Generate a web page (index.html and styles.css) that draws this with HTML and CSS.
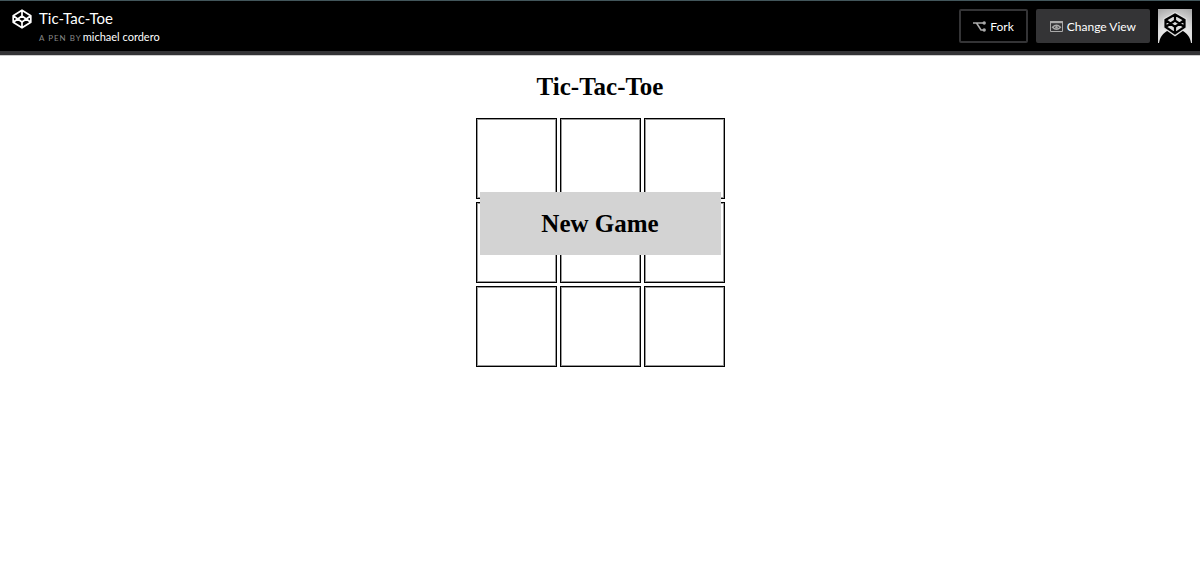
FILE: index.html
```html
<!DOCTYPE html>
<html lang="en">
<head>
<meta charset="utf-8">
<meta name="viewport" content="width=device-width, initial-scale=1">
<title>Tic-Tac-Toe</title>
<link rel="stylesheet" href="styles.css">
</head>
<body>
<header class="topbar">
  <a class="logo" href="#" aria-label="CodePen">
    <svg viewBox="0 0 20 20" fill="none" stroke="currentColor" stroke-width="1.7" stroke-linejoin="round">
      <path d="M10 1.2 18.8 6.8V13.2L10 18.8 1.2 13.2V6.8ZM10 1.2V7M10 13V18.8M1.2 6.8 10 13 18.8 6.8M1.2 13.2 10 7 18.8 13.2"/>
    </svg>
  </a>
  <div class="pen">
    <h1 class="pen-title">Tic-Tac-Toe</h1>
    <p class="pen-by"><span class="label">A PEN BY</span><a class="author" href="#">michael cordero</a></p>
  </div>
  <nav class="actions">
    <button class="button outline" type="button">
      <svg class="icon" viewBox="0 0 13 11" fill="none" stroke="currentColor" stroke-width="1.6">
        <path d="M0 2H3.5L8 9H11M4 2H11"/>
        <circle cx="11.2" cy="2" r="1.7" fill="currentColor" stroke="none"/>
        <circle cx="11.2" cy="9" r="1.7" fill="currentColor" stroke="none"/>
      </svg>
      <span>Fork</span>
    </button>
    <button class="button filled" type="button">
      <svg class="icon" viewBox="0 0 13 11" fill="none" stroke="currentColor">
        <path d="M.5.5H12.5V10.5H.5Z"/>
        <path d="M0 1.2H13" stroke-width="2"/>
        <path d="M2.5 6.2Q6.5 2.2 10.5 6.2Q6.5 10.2 2.5 6.2Z" stroke-width="1.3"/>
        <circle cx="6.5" cy="6.2" r="1.2" fill="currentColor" stroke="none"/>
      </svg>
      <span>Change View</span>
    </button>
    <a class="avatar" href="#" aria-label="Profile">
      <svg viewBox="0 0 34 34">
        <defs>
          <radialGradient id="glow" cx=".5" cy=".8" r=".9">
            <stop offset="0" stop-color="#fff"/>
            <stop offset=".55" stop-color="#ddd"/>
            <stop offset="1" stop-color="#aaa"/>
          </radialGradient>
        </defs>
        <path d="M0 0H34V34H0Z" fill="url(#glow)"/>
        <path d="M1 34C2 28 5 24 10 21.5L17 26.5 24 21.5C29 24 32 28 33 34Z"/>
        <path d="M17 5 27 11V18L17 25 7 18V11Z" fill="#ddd" stroke="#ddd" stroke-width="4"/>
        <path d="M17 5.5 26.5 11V18L17 24.5 7.5 18V11ZM17 5.5V11.5M17 18V24.5M7.5 11 17 18 26.5 11M7.5 18 17 11.5 26.5 18" fill="none" stroke="#000" stroke-width="2.2"/>
      </svg>
    </a>
  </nav>
</header>
<main class="game">
  <h2 class="heading">Tic-Tac-Toe</h2>
  <div class="board">
    <button class="cell" type="button" aria-label="Square 1"></button>
    <button class="cell" type="button" aria-label="Square 2"></button>
    <button class="cell" type="button" aria-label="Square 3"></button>
    <button class="cell" type="button" aria-label="Square 4"></button>
    <button class="cell" type="button" aria-label="Square 5"></button>
    <button class="cell" type="button" aria-label="Square 6"></button>
    <button class="cell" type="button" aria-label="Square 7"></button>
    <button class="cell" type="button" aria-label="Square 8"></button>
    <button class="cell" type="button" aria-label="Square 9"></button>
    <button class="new-game" type="button">New Game</button>
  </div>
</main>
</body>
</html>
```
FILE: styles.css
```css
* {
  box-sizing: border-box;
}

body {
  margin: 0;
  background: #fff;
  color: #000;
  font-family: "Liberation Serif", serif;
}

button {
  cursor: pointer;
}

.topbar {
  display: flex;
  align-items: flex-start;
  padding: 8px 8px 5px 12px;
  border-top: 1px solid #42565b;
  border-bottom: 4px solid #343436;
  box-shadow: 0 1px 0 #ccc;
  background: #000;
  color: #fff;
  font-family: Lato, sans-serif;
}

.logo {
  color: #fff;
}

.logo svg {
  display: block;
  width: 20px;
  height: 20px;
}

.pen {
  flex: 1;
  padding-left: 7px;
}

.pen-title {
  margin: 0;
  font-size: 15px;
  font-weight: 400;
  line-height: 18px;
}

.pen-by {
  display: flex;
  align-items: baseline;
  gap: 1px;
  margin: 2px 0 0;
  font-size: 11px;
  line-height: 16px;
}

.label {
  color: #888;
  font-size: 8px;
  letter-spacing: 1px;
}

.author {
  color: #fff;
  text-decoration: none;
}

.actions {
  display: flex;
  gap: 8px;
}

.button {
  display: flex;
  align-items: center;
  gap: 4px;
  height: 34px;
  padding: 0 12px;
  border: 2px solid #343436;
  border-radius: 2px;
  color: #fff;
  font-family: inherit;
  font-size: 12px;
}

.outline {
  background: #000;
}

.filled {
  background: #343436;
}

.icon {
  width: 13px;
  height: 11px;
  color: #aaa;
}

.avatar svg {
  display: block;
  width: 34px;
  height: 34px;
}

.game {
  display: flex;
  flex-direction: column;
  align-items: center;
  padding-top: 17px;
}

.heading {
  margin: 0 0 17px;
  font-size: 25px;
  line-height: 29px;
}

.board {
  position: relative;
  display: grid;
  grid-template-columns: repeat(3, 81px);
  grid-auto-rows: 81px;
  gap: 3px;
}

.cell {
  padding: 0;
  border: 1px solid #000;
  box-shadow: inset 0 0 0 1px #999;
  background: #fff;
}

.new-game {
  position: absolute;
  top: 74px;
  left: 4px;
  right: 4px;
  height: 63px;
  border: 0;
  background: #d3d3d3;
  color: #000;
  font: bold 25px/29px "Liberation Serif", serif;
}
```
